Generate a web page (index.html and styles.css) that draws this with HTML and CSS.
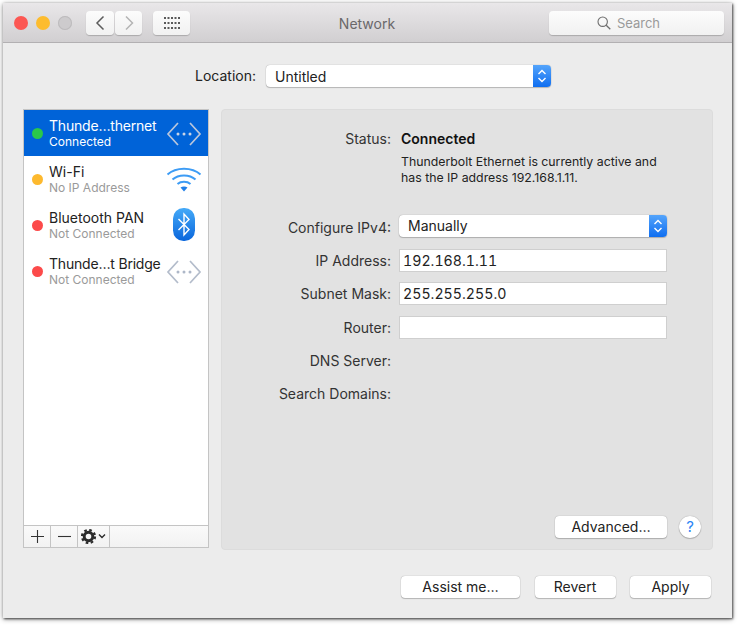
FILE: index.html
```html
<!DOCTYPE html>
<html lang="en">
<head>
  <meta charset="UTF-8">
  <title>Network</title>
  <link rel="stylesheet" href="styles.css">
</head>
<body>
  <div class="window">
    <div class="titlebar">
      <div class="lights">
        <span class="light red"></span>
        <span class="light yellow"></span>
        <span class="light grey"></span>
      </div>
      <div class="nav">
        <div class="tool-btn back">
          <svg width="12" height="16" viewBox="0 0 12 16"><path d="M9.500 1.500 3 8l6.500 6.500" fill="none" stroke="#5c5c5c" stroke-width="1.500"/></svg>
        </div>
        <div class="tool-btn forward">
          <svg width="12" height="16" viewBox="0 0 12 16"><path d="M3 1.500 9.500 8 3 14.500" fill="none" stroke="#b4b4b4" stroke-width="1.500"/></svg>
        </div>
      </div>
      <div class="tool-btn grid-btn">
        <svg width="16" height="12" viewBox="0 0 16 12" fill="#5a5a5a">
          <rect x="0" y="0" width="2" height="2"/><rect x="3.500" y="0" width="2" height="2"/><rect x="7" y="0" width="2" height="2"/><rect x="10.500" y="0" width="2" height="2"/><rect x="14" y="0" width="2" height="2"/>
          <rect x="0" y="5" width="2" height="2"/><rect x="3.500" y="5" width="2" height="2"/><rect x="7" y="5" width="2" height="2"/><rect x="10.500" y="5" width="2" height="2"/><rect x="14" y="5" width="2" height="2"/>
          <rect x="0" y="10" width="2" height="2"/><rect x="3.500" y="10" width="2" height="2"/><rect x="7" y="10" width="2" height="2"/><rect x="10.500" y="10" width="2" height="2"/><rect x="14" y="10" width="2" height="2"/>
        </svg>
      </div>
      <div class="window-title">Network</div>
      <div class="tool-btn search">
        <svg width="14" height="14" viewBox="0 0 14 14"><circle cx="5.700" cy="5.700" r="4.700" fill="none" stroke="#6e6e6e" stroke-width="1.100"/><path d="M9.200 9.200 13.300 13.300" stroke="#6e6e6e" stroke-width="1.300"/></svg>
        <span>Search</span>
      </div>
    </div>

    <div class="location">
      <span class="location-label">Location:</span>
      <div class="select location-select">
        <span class="select-text">Untitled</span>
        <span class="stepper">
          <svg width="10" height="16" viewBox="0 0 10 16"><path d="M1.500 6 5 2.500 8.500 6M1.500 10 5 13.500 8.500 10" fill="none" stroke="#fff" stroke-width="1.400"/></svg>
        </span>
      </div>
    </div>

    <div class="main">
      <div class="sidebar">
        <div class="services">
          <div class="service selected">
            <span class="dot green"></span>
            <div class="service-text">
              <div class="service-name truncated">Thunde…thernet</div>
              <div class="service-status">Connected</div>
            </div>
            <svg class="service-icon bridge-icon" width="36" height="26" viewBox="0 0 36 26"><path d="M12 2 2 13l10 11M24 2l10 11-10 11" fill="none" stroke="#b9c6dc" stroke-width="1.700"/><circle cx="12" cy="13" r="1.500" fill="#c9d4e6"/><circle cx="18" cy="13" r="1.500" fill="#c9d4e6"/><circle cx="24" cy="13" r="1.500" fill="#c9d4e6"/></svg>
          </div>
          <div class="service">
            <span class="dot yellow"></span>
            <div class="service-text">
              <div class="service-name">Wi-Fi</div>
              <div class="service-status">No IP Address</div>
            </div>
            <svg class="service-icon" width="36" height="26" viewBox="0 0 36 26"><g fill="none" stroke="#3d9cf5" stroke-width="2"><path d="M1.500 8.500C10 0.800 26 0.800 34.500 8.500"/><path d="M6.500 13.500C12.500 8 23.500 8 29.500 13.500"/><path d="M11.500 18C15 15 21 15 24.500 18"/></g><path d="M14.500 21.500C16.500 20 19.500 20 21.500 21.500L18 25.500Z" fill="#1f7fe8"/></svg>
          </div>
          <div class="service">
            <span class="dot red"></span>
            <div class="service-text">
              <div class="service-name">Bluetooth PAN</div>
              <div class="service-status">Not Connected</div>
            </div>
            <svg class="service-icon" width="36" height="34" viewBox="0 0 36 34"><defs><linearGradient id="bt" x1="0" y1="0" x2="0" y2="1"><stop offset="0" stop-color="#45aaf8"/><stop offset="1" stop-color="#0a66dc"/></linearGradient></defs><rect x="7" y="0" width="22" height="33" rx="10.500" fill="url(#bt)"/><path d="M12.500 11 23 21.500 18 27V6l5 5.500L12.500 22" fill="none" stroke="#fff" stroke-width="1.400"/></svg>
          </div>
          <div class="service">
            <span class="dot red"></span>
            <div class="service-text">
              <div class="service-name truncated">Thunde…t Bridge</div>
              <div class="service-status">Not Connected</div>
            </div>
            <svg class="service-icon bridge-icon" width="36" height="26" viewBox="0 0 36 26"><path d="M12 2 2 13l10 11M24 2l10 11-10 11" fill="none" stroke="#b3bccb" stroke-width="1.700"/><circle cx="12" cy="13" r="1.500" fill="#adb7c8"/><circle cx="18" cy="13" r="1.500" fill="#adb7c8"/><circle cx="24" cy="13" r="1.500" fill="#adb7c8"/></svg>
          </div>
        </div>
        <div class="sidebar-tools">
          <div class="tool-cell">
            <svg width="13" height="13" viewBox="0 0 13 13"><path d="M6.500 0v13M0 6.500h13" stroke="#333" stroke-width="1.100"/></svg>
          </div>
          <div class="tool-cell">
            <svg width="13" height="13" viewBox="0 0 13 13"><path d="M0 6.500h13" stroke="#333" stroke-width="1.100"/></svg>
          </div>
          <div class="tool-cell gear-cell">
            <svg width="26" height="15" viewBox="0 0 26 15"><circle cx="7.500" cy="7.500" r="4.300" fill="none" stroke="#2b2b2b" stroke-width="3"/><circle cx="7.500" cy="7.500" r="6.500" fill="none" stroke="#2b2b2b" stroke-width="2.200" stroke-dasharray="2.600 2.500"/><path d="M18 5.500 21 8.500 24 5.500" fill="none" stroke="#2b2b2b" stroke-width="1.400"/></svg>
          </div>
          <div class="tool-cell tool-rest"></div>
        </div>
      </div>

      <div class="panel">
        <div class="status-row">
          <span class="field-label">Status:</span>
          <span class="status-value">Connected</span>
        </div>
        <div class="status-desc">Thunderbolt Ethernet is currently active and<br>has the IP address 192.168.1.11.</div>

        <div class="form">
          <div class="form-row">
            <span class="field-label">Configure IPv4:</span>
            <div class="select config-select">
              <span class="select-text">Manually</span>
              <span class="stepper">
                <svg width="10" height="16" viewBox="0 0 10 16"><path d="M1.500 6 5 2.500 8.500 6M1.500 10 5 13.500 8.500 10" fill="none" stroke="#fff" stroke-width="1.400"/></svg>
              </span>
            </div>
          </div>
          <div class="form-row">
            <span class="field-label">IP Address:</span>
            <div class="text-field">192.168.1.11</div>
          </div>
          <div class="form-row">
            <span class="field-label">Subnet Mask:</span>
            <div class="text-field">255.255.255.0</div>
          </div>
          <div class="form-row">
            <span class="field-label">Router:</span>
            <div class="text-field"></div>
          </div>
          <div class="form-row">
            <span class="field-label">DNS Server:</span>
          </div>
          <div class="form-row">
            <span class="field-label">Search Domains:</span>
          </div>
        </div>

        <div class="panel-actions">
          <div class="push-btn advanced">Advanced…</div>
          <div class="help">?</div>
        </div>
      </div>
    </div>

    <div class="footer">
      <div class="push-btn assist">Assist me…</div>
      <div class="push-btn revert">Revert</div>
      <div class="push-btn apply">Apply</div>
    </div>
  </div>
</body>
</html>
```

FILE: styles.css
```css
html, body {
  margin: 0;
  min-height: 100vh;
  background: #fff;
  font-family: Inter, "Liberation Sans", sans-serif;
  font-size: 14px;
  color: #222;
}

.window {
  width: 729px;
  height: 615px;
  margin: 3px 0 0 3px;
  display: flex;
  flex-direction: column;
  background: #ececec;
  box-shadow: 1px 1px 2px rgba(0, 0, 0, 0.6), 0 1px 5px rgba(0, 0, 0, 0.45);
}

.titlebar {
  height: 39px;
  flex: none;
  display: flex;
  align-items: center;
  padding: 0 8px 0 11px;
  background: linear-gradient(#e9e7e9, #d1cfd1);
  border-bottom: 1px solid #b2b0b2;
}

.lights {
  display: flex;
  gap: 8px;
  margin-right: 14px;
}

.light {
  width: 14px;
  height: 14px;
  border-radius: 50%;
}

.light.red { background: #fc5753; }
.light.yellow { background: #fdbc2e; }
.light.grey { background: #cdcbcd; box-shadow: inset 0 0 0 1px #bdbbbd; }

.nav {
  display: flex;
  gap: 1px;
  margin-right: 11px;
}

.tool-btn {
  height: 24px;
  display: flex;
  align-items: center;
  justify-content: center;
  background: linear-gradient(#fcfcfc, #f1f1f1);
  border-radius: 4px;
  box-shadow: 0 1px 1px rgba(0, 0, 0, 0.2);
}

.back { width: 28px; }
.forward { width: 27px; }
.grid-btn { width: 37px; }

.window-title {
  flex: 1;
  text-align: center;
  padding: 2px 5px 0 0;
  color: #6a686a;
}

.search {
  width: 159px;
  padding-right: 16px;
  gap: 6px;
  color: #9a9a9a;
  font-size: 13px;
}

.location {
  height: 22px;
  margin: 22px 0;
  padding-left: 192px;
  flex: none;
  display: flex;
  align-items: center;
  gap: 10px;
}

.location-label { padding-bottom: 1px; }

.select {
  height: 22px;
  display: flex;
  align-items: center;
  justify-content: space-between;
  background: #fff;
  border-radius: 4px;
  box-shadow: 0 0 1px rgba(0, 0, 0, 0.4), 0 1px 1px rgba(0, 0, 0, 0.2);
  overflow: hidden;
}

.location-select { width: 285px; }
.config-select { width: 268px; margin-bottom: 3px; }

.select-text { padding-left: 9px; }

.stepper {
  width: 18px;
  height: 22px;
  display: flex;
  align-items: center;
  justify-content: center;
  background: linear-gradient(#54a4fb, #0f6ef0);
}

.main {
  flex: 1;
  min-height: 0;
  display: flex;
  gap: 12px;
  padding: 0 19px 0 20px;
}

.sidebar {
  width: 184px;
  height: 437px;
  display: flex;
  flex-direction: column;
  background: #fff;
  border: 1px solid #c4c4c4;
}

.services { flex: 1; }

.service {
  height: 46px;
  display: flex;
  align-items: center;
  padding: 0 6px 0 7px;
}

.service.selected {
  background: #0063d8;
  color: #fff;
}

.dot {
  width: 11px;
  height: 11px;
  flex: none;
  margin: 0 6px 0 1px;
  border-radius: 50%;
}

.dot.green { background: #2ac84a; }
.dot.yellow { background: #fdb92e; }
.dot.red { background: #fc4a4a; }

.service-text {
  flex: 1;
  min-width: 0;
}

.service-name {
  line-height: 17px;
  white-space: nowrap;
}

.service-name.truncated { letter-spacing: -0.2px; }

.service-status {
  font-size: 12px;
  line-height: 16px;
  color: #9a9a9a;
}

.selected .service-status { color: #fff; }

.service-icon { flex: none; }
.bridge-icon { margin-top: 2px; }

.sidebar-tools {
  height: 21px;
  flex: none;
  display: flex;
  background: linear-gradient(#fafafa, #f2f2f2);
  border-top: 1px solid #c4c4c4;
}

.tool-cell {
  width: 26px;
  display: flex;
  align-items: center;
  justify-content: center;
  border-right: 1px solid #c4c4c4;
}

.gear-cell { width: 31px; }
.tool-rest { flex: 1; border-right: 0; }

.panel {
  flex: 1;
  height: 441px;
  display: flex;
  flex-direction: column;
  box-sizing: border-box;
  padding: 19px 11px 11px 0;
  background: #e2e2e2;
  border: 1px solid #dcdcdc;
  border-radius: 4px;
}

.field-label {
  width: 169px;
  flex: none;
  text-align: right;
  color: #333;
}

.status-row {
  height: 18px;
  display: flex;
  align-items: center;
  gap: 10px;
}

.status-value { font-weight: 600; color: #111; }

.status-desc {
  margin: 7px 0 0 179px;
  font-size: 12.300px;
  line-height: 16px;
}

.form {
  margin-top: 29.500px;
  display: flex;
  flex-direction: column;
  gap: 10.400px;
}

.form-row {
  height: 23px;
  display: flex;
  align-items: center;
  gap: 8px;
}

.text-field {
  width: 268px;
  height: 23px;
  box-sizing: border-box;
  padding-left: 3px;
  line-height: 21px;
  background: #fff;
  border: 1px solid #cfcfcf;
  font-size: 14.200px;
  font-variant-numeric: tabular-nums;
}

.panel-actions {
  margin-top: auto;
  display: flex;
  justify-content: flex-end;
  align-items: center;
  gap: 12px;
}

.push-btn {
  height: 22px;
  line-height: 22px;
  text-align: center;
  background: #fff;
  border-radius: 4px;
  box-shadow: 0 0 1px rgba(0, 0, 0, 0.4), 0 1px 1px rgba(0, 0, 0, 0.2);
}

.advanced { width: 112px; }

.help {
  width: 22px;
  height: 22px;
  line-height: 22px;
  text-align: center;
  font-size: 15px;
  color: #2a84f5;
  background: #fff;
  border-radius: 50%;
  box-shadow: 0 0 1px rgba(0, 0, 0, 0.4), 0 1px 1px rgba(0, 0, 0, 0.2);
}

.footer {
  height: 22px;
  flex: none;
  display: flex;
  justify-content: flex-end;
  gap: 14.500px;
  padding: 0 21px 20px 0;
}

.assist { width: 119px; }
.revert { width: 81px; }
.apply { width: 81px; }
```
